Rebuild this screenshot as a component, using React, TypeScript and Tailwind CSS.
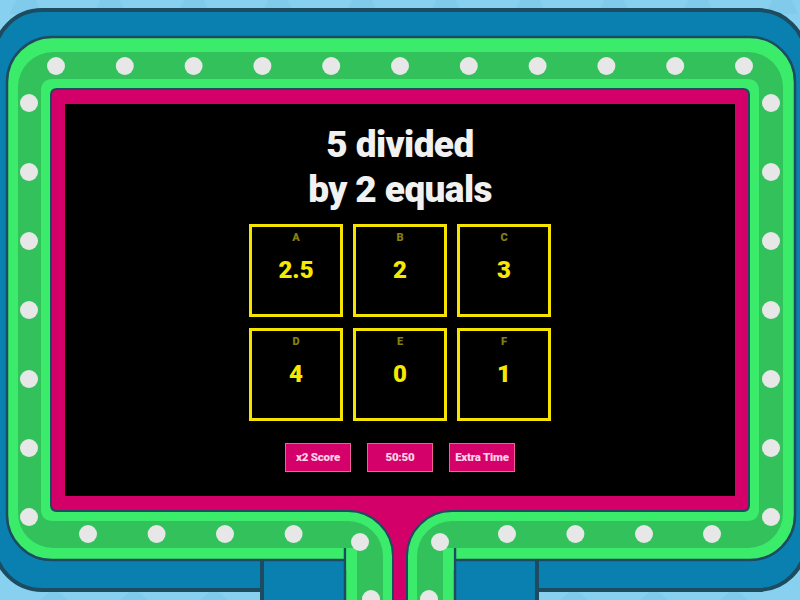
import React from "react";

const NAVY = "#1d4b5f";
const BLUE = "#0a80b1";
const LG = "#3bec6b";
const DG = "#32c15a";
const PINK = "#d4006a";
const DOT = "#e7e7e7";

const topDots = Array.from({ length: 11 }, (_, i) => 56 + i * 68.8);
const sideDots = Array.from({ length: 7 }, (_, i) => 103 + i * 69);
const bottomLeft = [88, 156.6, 225, 293.6];
const bottomRight = [507, 575.4, 644, 712];

function Backdrop() {
  const tris = Array.from({ length: 10 }, (_, i) => i * 84 + 10);
  return (
    <svg
      className="absolute inset-0"
      width={800}
      height={600}
      viewBox="0 0 800 600"
    >
      <rect x={0} y={0} width={800} height={600} fill="#88d0ef" />
      {tris.map((x, i) => (
        <polygon
          key={"t" + i}
          points={`${x},14 ${x + 16},-24 ${x + 32},14`}
          fill="#80cbeb"
        />
      ))}
      {[40, 120, 200, 560, 640, 720].map((x, i) => (
        <polygon
          key={"b" + i}
          points={`${x},600 ${x + 14},588 ${x + 28},600`}
          fill="#80cbeb"
        />
      ))}
      {/* blue board */}
      <rect x={-6} y={10} width={812} height={580} rx={48} fill={BLUE} stroke={NAVY} strokeWidth={4} />
      <rect x={262} y={560} width={275} height={60} fill={BLUE} stroke={NAVY} strokeWidth={4} />
      <rect x={264} y={550} width={271} height={60} fill={BLUE} />
      {/* outer light green */}
      <rect x={7} y={37} width={788} height={523} rx={45} fill={LG} stroke={NAVY} strokeWidth={2.5} />
      <rect x={345} y={540} width={110} height={80} rx={6} fill={LG} stroke={NAVY} strokeWidth={2.5} />
      <rect x={346.5} y={530} width={107} height={40} fill={LG} />
      {/* dark green */}
      <rect x={18} y={52} width={765} height={496} rx={35} fill={DG} />
      <rect x={357} y={530} width={86} height={90} fill={DG} />
      {/* inner light green */}
      <path
        d="M 53 79 H 747 Q 759 79 759 91 V 509 Q 759 521 747 521 H 452 A 35 35 0 0 0 417 556 V 620 H 383 V 556 A 35 35 0 0 0 348 521 H 53 Q 41 521 41 509 V 91 Q 41 79 53 79 Z"
        fill={LG}
      />
      {/* pink */}
      <path
        d="M 57 89 H 743 Q 749 89 749 95 V 505 Q 749 511 743 511 H 452 A 45 45 0 0 0 407 556 V 620 H 393 V 556 A 45 45 0 0 0 348 511 H 57 Q 51 511 51 505 V 95 Q 51 89 57 89 Z"
        fill={PINK}
        stroke={NAVY}
        strokeWidth={2}
      />
      {/* dots */}
      {topDots.map((x, i) => (
        <circle key={"td" + i} cx={x} cy={66} r={9} fill={DOT} />
      ))}
      {sideDots.map((y, i) => (
        <circle key={"ld" + i} cx={29} cy={y} r={9} fill={DOT} />
      ))}
      {sideDots.map((y, i) => (
        <circle key={"rd" + i} cx={771} cy={y} r={9} fill={DOT} />
      ))}
      {bottomLeft.map((x, i) => (
        <circle key={"bl" + i} cx={x} cy={534} r={9} fill={DOT} />
      ))}
      {bottomRight.map((x, i) => (
        <circle key={"br" + i} cx={x} cy={534} r={9} fill={DOT} />
      ))}
      <circle cx={360} cy={542} r={9} fill={DOT} />
      <circle cx={440} cy={542} r={9} fill={DOT} />
      <circle cx={371} cy={599} r={9} fill={DOT} />
      <circle cx={429} cy={599} r={9} fill={DOT} />
    </svg>
  );
}

const tiles = [
  { l: "A", v: "2.5" },
  { l: "B", v: "2" },
  { l: "C", v: "3" },
  { l: "D", v: "4" },
  { l: "E", v: "0" },
  { l: "F", v: "1" },
];

const buttons = ["x2 Score", "50:50", "Extra Time"];

export default function App() {
  return (
    <div className="relative w-[800px] h-[600px] overflow-hidden bg-[#88d0ef] font-['Roboto',sans-serif]">
      <Backdrop />
      <div className="relative pt-[104px] pl-[65px]">
        <div className="w-[670px] h-[392px] bg-black flex flex-col items-center pt-[18px]">
          <div className="text-[37px] leading-[45px] font-black text-[#f1f1f1] text-center tracking-[-0.6px]">
            <div>5 divided</div>
            <div>by 2 equals</div>
          </div>
          <div className="mt-[12px] grid grid-cols-3 gap-x-[10px] gap-y-[11px]">
            {tiles.map((t) => (
              <div
                key={t.l}
                className="w-[94px] h-[93px] border-[3px] border-[#f4e400] flex flex-col items-center pt-[4px]"
              >
                <div className="text-[11px] leading-[13px] font-black text-[#85800f]">
                  {t.l}
                </div>
                <div className="mt-[12px] text-[24px] leading-[28px] font-black text-[#f7e800]">
                  {t.v}
                </div>
              </div>
            ))}
          </div>
          <div className="mt-[22px] flex gap-[16px]">
            {buttons.map((b) => (
              <div
                key={b}
                className="w-[66px] h-[29px] bg-[#d4016b] border border-[#ee5f9c] flex items-center justify-center text-[11.5px] font-black tracking-[-0.2px] text-[#ffd2e8]"
              >
                {b}
              </div>
            ))}
          </div>
        </div>
      </div>
    </div>
  );
}
